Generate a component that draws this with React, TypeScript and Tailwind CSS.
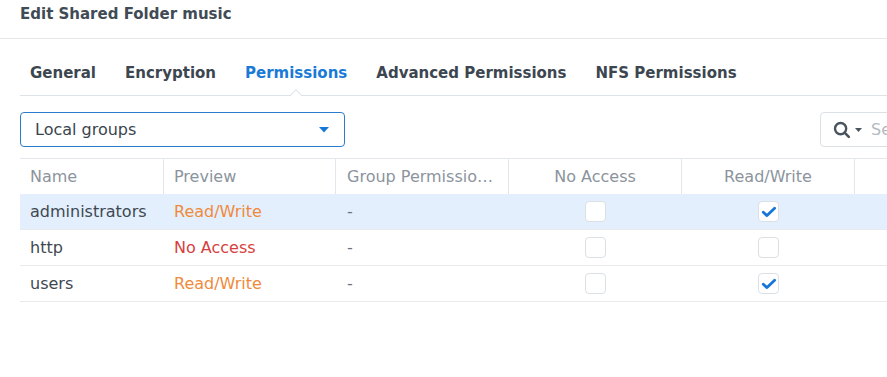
import React from "react";

const TABS = ["General", "Encryption", "Permissions", "Advanced Permissions", "NFS Permissions"];

const ROWS = [
  { name: "administrators", preview: "Read/Write", noAccess: false, readWrite: true, selected: true },
  { name: "http", preview: "No Access", noAccess: false, readWrite: false, selected: false },
  { name: "users", preview: "Read/Write", noAccess: false, readWrite: true, selected: false },
];

function Checkbox({ checked }: { checked: boolean }) {
  return (
    <span className="flex h-[21px] w-[21px] items-center justify-center rounded-[4px] border border-[#dbe0e5] bg-white">
      {checked && (
        <svg width="16" height="16" viewBox="0 0 16 16" fill="none">
          <path d="M2.3 8.2 L6 11.6 L13.6 4.2" stroke="#1677d8" strokeWidth="2.8" strokeLinecap="round" strokeLinejoin="round" />
        </svg>
      )}
    </span>
  );
}

export default function App() {
  return (
    <div className="h-[377px] w-[887px] overflow-hidden bg-white font-['DejaVu_Sans',sans-serif]">
      <div className="w-[1040px]">
        {/* title bar */}
        <div className="h-[39px] border-b border-[#e6e9ec] pl-[20px] pt-[4px]">
          <h1 className="text-[15px] font-bold leading-[20px] text-[#414b55]">Edit Shared Folder music</h1>
        </div>

        {/* tabs */}
        <div className="ml-[20px] mr-[20px] flex gap-[29px] border-b border-[#dde2e7] pl-[10px] pt-[24px] pb-[12px]">
          {TABS.map((t) => (
            <div
              key={t}
              className={`relative text-[15px] font-bold leading-[20px] ${
                t === "Permissions" ? "text-[#1a7ad6]" : "text-[#3c4650]"
              }`}
            >
              {t}
              {t === "Permissions" && (
                <span className="absolute bottom-[-17px] left-1/2 h-[9px] w-[9px] -translate-x-1/2 rotate-45 border-l border-t border-[#dde2e7] bg-white" />
              )}
            </div>
          ))}
        </div>

        {/* toolbar */}
        <div className="mx-[20px] mt-[16px] flex items-center justify-between">
          <div className="flex h-[35px] w-[325px] items-center justify-between rounded-[4px] border border-[#2a7ccd] pl-[14px] pr-[15px]">
            <span className="text-[16px] text-[#3a444e]">Local groups</span>
            <svg width="10" height="6" viewBox="0 0 10 6">
              <path d="M0 0 H10 L5 5.5 Z" fill="#1677d8" />
            </svg>
          </div>
          <div className="flex h-[35px] w-[200px] items-center rounded-[4px] border border-[#dbe0e5] pl-[12px]">
            <svg width="18" height="18" viewBox="0 0 18 18" fill="none">
              <circle cx="7.6" cy="7.6" r="5.6" stroke="#4a545e" strokeWidth="2.4" />
              <path d="M11.6 11.6 L15.8 15.8" stroke="#4a545e" strokeWidth="2.6" strokeLinecap="round" />
            </svg>
            <svg className="ml-[4px]" width="7" height="4" viewBox="0 0 7 4">
              <path d="M0 0 H7 L3.5 4 Z" fill="#4a545e" />
            </svg>
            <span className="ml-[9px] text-[16px] text-[#b3bac1]">Search</span>
          </div>
        </div>

        {/* table */}
        <div className="ml-[20px] mt-[11px] border-t border-[#e3e7eb] text-[16px]">
          <div className="grid h-[35px] grid-cols-[144px_172px_173px_173px_173px_1fr] text-[#8b949d]">
            <div className="flex items-center border-r border-[#e3e7eb] pl-[10px]">Name</div>
            <div className="flex items-center border-r border-[#e3e7eb] pl-[10px]">Preview</div>
            <div className="flex min-w-0 items-center border-r border-[#e3e7eb] pl-[11px] pr-[14px]">
              <span className="truncate">Group Permissions</span>
            </div>
            <div className="flex items-center justify-center border-r border-[#e3e7eb]">No Access</div>
            <div className="flex items-center justify-center border-r border-[#e3e7eb]">Read/Write</div>
            <div />
          </div>
          {ROWS.map((r) => (
            <div
              key={r.name}
              className={`grid h-[36px] grid-cols-[144px_172px_173px_173px_173px_1fr] border-b border-[#e8ebee] ${
                r.selected ? "bg-[#e3effc]" : "bg-white"
              }`}
            >
              <div className="flex items-center pl-[10px] text-[#3e4852]">{r.name}</div>
              <div
                className={`flex items-center pl-[10px] ${
                  r.preview === "No Access" ? "text-[#d63f3f]" : "text-[#ef8a3c]"
                }`}
              >
                {r.preview}
              </div>
              <div className="flex items-center pl-[11px] text-[#6b757f]">-</div>
              <div className="flex items-center justify-center">
                <Checkbox checked={r.noAccess} />
              </div>
              <div className="flex items-center justify-center">
                <Checkbox checked={r.readWrite} />
              </div>
              <div />
            </div>
          ))}
        </div>
      </div>
    </div>
  );
}
